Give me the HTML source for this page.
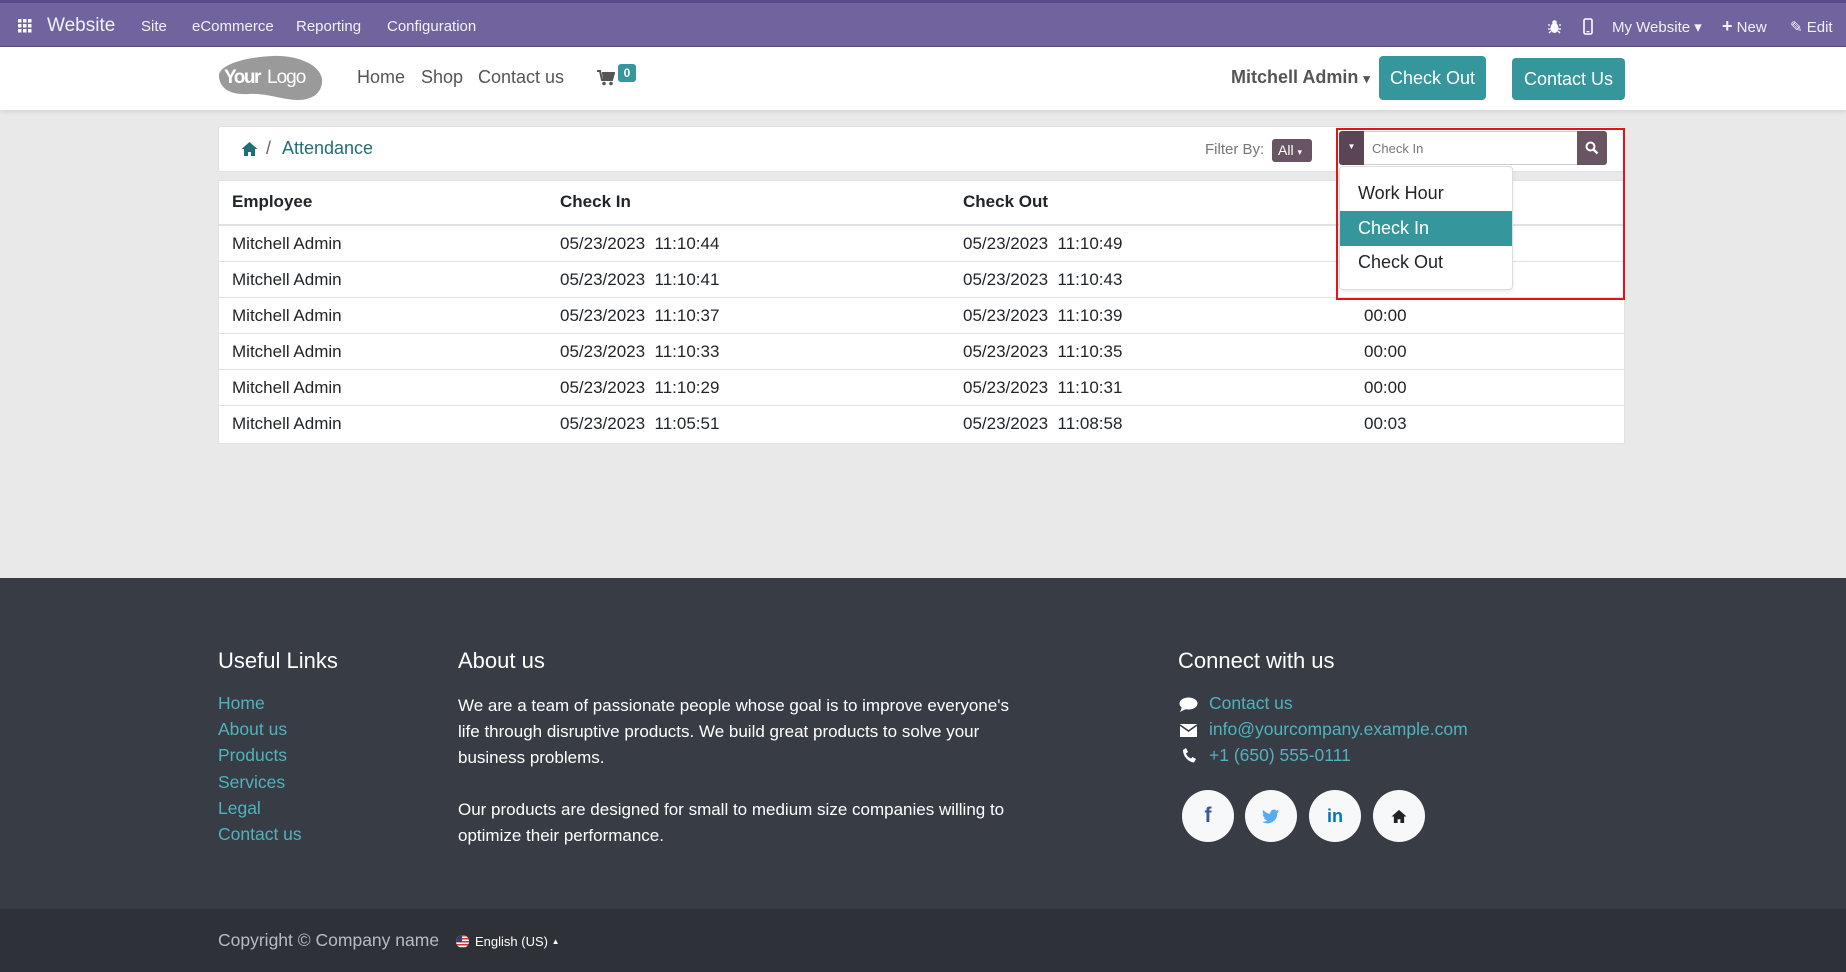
<!DOCTYPE html>
<html><head><meta charset="utf-8">
<style>
*{box-sizing:border-box;margin:0;padding:0}
body{width:1846px;height:972px;overflow:hidden;background:#e9e9ea;font-family:"Liberation Sans",sans-serif;color:#222;position:relative}
.a{position:absolute;white-space:nowrap}
.top{position:absolute;left:0;top:0;width:1846px;height:47px;background:#71639e;border-top:3px solid #5d4a8c;border-bottom:1px solid #5a4d80;color:#fff}
.top .a{color:#f2f0f7}
.hdr{position:absolute;left:0;top:47px;width:1846px;height:63px;background:#fff;box-shadow:0 2px 4px rgba(0,0,0,.08)}
.btn{position:absolute;background:#35979c;color:#fff;border-radius:4px;font-size:18px;display:flex;align-items:center;justify-content:center}
.box{position:absolute;background:#fff;border:1px solid #dee2e6;border-radius:3px}
.row{position:absolute;left:218px;width:1407px;height:36px;border-top:1px solid #dee2e6;font-size:17px;color:#212529}
.row span{position:absolute;top:8px}
.foot{position:absolute;left:0;top:578px;width:1846px;height:331px;background:#383d45}
.bot{position:absolute;left:0;top:909px;width:1846px;height:63px;background:#2e3238}
.fl{color:#4fb3bd;font-size:17.5px}
.ft{color:#fff;font-size:17.5px}
.circ{position:absolute;width:52px;height:52px;border-radius:50%;background:#f7f8fa;top:790px;display:flex;align-items:center;justify-content:center;font-weight:bold;font-size:18px}
</style></head><body>
<div class="top">
  <svg class="a" style="left:18px;top:16px" width="14" height="14" viewBox="0 0 14 14" fill="#fff"><rect x="0" y="0" width="3.5" height="3.5"/><rect x="5" y="0" width="3.5" height="3.5"/><rect x="10" y="0" width="3.5" height="3.5"/><rect x="0" y="5" width="3.5" height="3.5"/><rect x="5" y="5" width="3.5" height="3.5"/><rect x="10" y="5" width="3.5" height="3.5"/><rect x="0" y="10" width="3.5" height="3.5"/><rect x="5" y="10" width="3.5" height="3.5"/><rect x="10" y="10" width="3.5" height="3.5"/></svg>
  <div class="a" style="left:47px;top:12px;font-size:19px">Website</div>
  <div class="a" style="left:141px;top:15px;font-size:15px">Site</div>
  <div class="a" style="left:192px;top:15px;font-size:15px">eCommerce</div>
  <div class="a" style="left:296px;top:15px;font-size:15px">Reporting</div>
  <div class="a" style="left:387px;top:15px;font-size:15px">Configuration</div>
  <svg class="a" style="left:1548px;top:17px" width="13" height="14" viewBox="0 0 13 14" fill="#fff"><ellipse cx="6.5" cy="8" rx="4" ry="5"/><circle cx="6.5" cy="2.5" r="2.3"/><path d="M0 5h2M11 5h2M0 9h2.5M10.5 9h2.5M1 13l2-2M12 13l-2-2" stroke="#fff" stroke-width="1.3"/></svg>
  <svg class="a" style="left:1583px;top:15px" width="10" height="17" viewBox="0 0 10 17"><rect x="1" y="1" width="8" height="15" rx="1.5" fill="none" stroke="#fff" stroke-width="1.6"/><rect x="3.5" y="13" width="3" height="1.3" fill="#fff"/></svg>
  <div class="a" style="left:1612px;top:15px;font-size:15px">My Website ▾</div>
  <div class="a" style="left:1722px;top:13px;font-size:15px"><b style="font-size:18px">+</b> New</div>
  <div class="a" style="left:1790px;top:15px;font-size:15px">✎ Edit</div>
</div>
<div class="hdr">
  <svg class="a" style="left:216px;top:8px" width="108" height="46" viewBox="0 0 108 46"><path d="M3 22C1 10 30 2 57 1 82 0 104 10 106 24 107 38 96 45 82 45 66 45 52 38 32 39 12 40 4 32 3 22Z" fill="#9a9a9a"/><text x="8" y="28" font-family="Liberation Sans" font-size="19" font-weight="bold" fill="#fff" letter-spacing="-1.5">Your</text><text x="51" y="28" font-family="Liberation Sans" font-size="19" fill="#fff" letter-spacing="-1">Logo</text></svg>
  <div class="a" style="left:357px;top:20px;font-size:18px;color:#555">Home</div>
  <div class="a" style="left:421px;top:20px;font-size:18px;color:#555">Shop</div>
  <div class="a" style="left:478px;top:20px;font-size:18px;color:#555">Contact us</div>
  <svg class="a" style="left:597px;top:23px" width="18" height="16" viewBox="0 0 18 16" fill="#555"><path d="M0 1h3l2 9h10l2-7H5" stroke="#555" stroke-width="2" fill="none"/><path d="M5 3h12l-2 7H6z"/><circle cx="7" cy="13.5" r="1.8"/><circle cx="14" cy="13.5" r="1.8"/></svg>
  <div class="a" style="left:618px;top:17px;width:18px;height:18px;background:#35979c;color:#fff;border-radius:3px;font-size:12px;font-weight:bold;text-align:center;line-height:18px">0</div>
  <div class="a" style="left:1231px;top:20px;font-size:18px;color:#555;font-weight:bold">Mitchell Admin <span style="font-size:13px">▾</span></div>
  <div class="btn" style="left:1379px;top:9px;width:107px;height:44px">Check Out</div>
  <div class="btn" style="left:1512px;top:11px;width:113px;height:42px">Contact Us</div>
</div>

<div class="box" style="left:218px;top:126px;width:1407px;height:46px"></div>
<svg class="a" style="left:241px;top:141px" width="17" height="15" viewBox="0 0 17 15" fill="#1f6f73"><path d="M8.5 1L0.5 8h2.5v7h4v-4h3v4h4V8h2.5z"/></svg>
<div class="a" style="left:266px;top:138px;font-size:18px;color:#666">/</div>
<div class="a" style="left:282px;top:138px;font-size:18px;color:#1f6f73">Attendance</div>
<div class="a" style="left:1205px;top:141px;font-size:15px;color:#777">Filter By:</div>
<div class="a" style="left:1272px;top:139px;width:40px;height:23px;background:#685463;color:#fff;border-radius:3px;font-size:14px;line-height:23px;padding-left:6px">All <span style="font-size:9px">▾</span></div>

<div class="box" style="left:218px;top:180px;width:1407px;height:264px;border-radius:2px"></div>
<div class="a" style="left:232px;top:192px;font-size:17px;font-weight:bold;color:#212529">Employee</div>
<div class="a" style="left:560px;top:192px;font-size:17px;font-weight:bold;color:#212529">Check In</div>
<div class="a" style="left:963px;top:192px;font-size:17px;font-weight:bold;color:#212529">Check Out</div>
<div class="row" style="top:224px;border-top:2px solid #dee2e6"><span style="left:14px">Mitchell Admin</span><span style="left:342px">05/23/2023&nbsp; 11:10:44</span><span style="left:745px">05/23/2023&nbsp; 11:10:49</span></div>
<div class="row" style="top:261px"><span style="left:14px">Mitchell Admin</span><span style="left:342px">05/23/2023&nbsp; 11:10:41</span><span style="left:745px">05/23/2023&nbsp; 11:10:43</span></div>
<div class="row" style="top:297px"><span style="left:14px">Mitchell Admin</span><span style="left:342px">05/23/2023&nbsp; 11:10:37</span><span style="left:745px">05/23/2023&nbsp; 11:10:39</span><span style="left:1146px">00:00</span></div>
<div class="row" style="top:333px"><span style="left:14px">Mitchell Admin</span><span style="left:342px">05/23/2023&nbsp; 11:10:33</span><span style="left:745px">05/23/2023&nbsp; 11:10:35</span><span style="left:1146px">00:00</span></div>
<div class="row" style="top:369px"><span style="left:14px">Mitchell Admin</span><span style="left:342px">05/23/2023&nbsp; 11:10:29</span><span style="left:745px">05/23/2023&nbsp; 11:10:31</span><span style="left:1146px">00:00</span></div>
<div class="row" style="top:405px"><span style="left:14px">Mitchell Admin</span><span style="left:342px">05/23/2023&nbsp; 11:05:51</span><span style="left:745px">05/23/2023&nbsp; 11:08:58</span><span style="left:1146px">00:03</span></div>

<div class="a" style="left:1339px;top:131px;width:25px;height:34px;background:#5b4555;border-radius:3px 0 0 3px;color:#fff;font-size:8px;text-align:center;line-height:32px">▼</div>
<div class="a" style="left:1364px;top:131px;width:214px;height:34px;background:#fff;border:1px solid #ccc;border-left:none;font-size:13px;color:#777;padding:9px 8px">Check In</div>
<div class="a" style="left:1577px;top:131px;width:30px;height:34px;background:#685463;border-radius:0 3px 3px 0"><svg style="position:absolute;left:8px;top:10px" width="14" height="14" viewBox="0 0 14 14"><circle cx="5.5" cy="5.5" r="4" fill="none" stroke="#fff" stroke-width="2"/><path d="M8.5 8.5l4 4" stroke="#fff" stroke-width="2.4"/></svg></div>
<div class="a" style="left:1339px;top:166px;width:174px;height:124px;background:#fff;border:1px solid #ddd;border-radius:4px;box-shadow:0 2px 4px rgba(0,0,0,.08)"></div>
<div class="a" style="left:1358px;top:183px;font-size:18px;color:#212529">Work Hour</div>
<div class="a" style="left:1340px;top:211px;width:172px;height:35px;background:#35979c"></div>
<div class="a" style="left:1358px;top:218px;font-size:18px;color:#fff">Check In</div>
<div class="a" style="left:1358px;top:252px;font-size:18px;color:#212529">Check Out</div>
<div class="a" style="left:1336px;top:128px;width:289px;height:172px;border:2px solid #e8101b"></div>

<div class="foot"></div>
<div class="a ft" style="left:218px;top:648px;font-size:22px">Useful Links</div>
<div class="a fl" style="left:218px;top:693px">Home</div>
<div class="a fl" style="left:218px;top:719px">About us</div>
<div class="a fl" style="left:218px;top:745px">Products</div>
<div class="a fl" style="left:218px;top:772px">Services</div>
<div class="a fl" style="left:218px;top:798px">Legal</div>
<div class="a fl" style="left:218px;top:824px">Contact us</div>
<div class="a ft" style="left:458px;top:648px;font-size:22px">About us</div>
<div class="a ft" style="left:458px;top:693px;line-height:26px;white-space:normal;width:570px;font-size:17px">We are a team of passionate people whose goal is to improve everyone's life through disruptive products. We build great products to solve your business problems.<br><br>Our products are designed for small to medium size companies willing to optimize their performance.</div>
<div class="a ft" style="left:1178px;top:648px;font-size:22px">Connect with us</div>
<svg class="a" style="left:1179px;top:697px" width="19" height="16" viewBox="0 0 19 16" fill="#fff"><ellipse cx="9.5" cy="6.5" rx="9" ry="6"/><path d="M3 10l-2 5 6-3z"/></svg>
<svg class="a" style="left:1180px;top:724px" width="17" height="13" viewBox="0 0 17 13"><rect x="0" y="0" width="17" height="13" fill="#fff"/><path d="M0 1l8.5 6L17 1" stroke="#383d45" stroke-width="1.6" fill="none"/></svg>
<svg class="a" style="left:1182px;top:748px" width="14" height="15" viewBox="0 0 14 15" fill="#fff"><path d="M1 2l3-2 2 4-2 1.5c1 2.5 2.5 4 5 5L10.5 9l3.5 2-2 3.5C6 14 1 8 1 2z"/></svg>
<div class="a fl" style="left:1209px;top:693px">Contact us</div>
<div class="a fl" style="left:1209px;top:719px">info@yourcompany.example.com</div>
<div class="a fl" style="left:1209px;top:745px">+1 (650) 555-0111</div>
<div class="circ" style="left:1182px;color:#3b5998;font-size:21px">f</div>
<div class="circ" style="left:1245px"><svg width="18" height="15" viewBox="0 0 18 15"><path d="M17 2c-.6.3-1.3.5-2 .6.7-.4 1.300-1.100 1.500-1.900-.7.4-1.400.7-2.200.9A3.5 3.5 0 0 0 8.4 4.7 10 10 0 0 1 1.2 1 3.5 3.5 0 0 0 2.3 5.7c-.6 0-1.100-.2-1.600-.4 0 1.700 1.200 3.100 2.800 3.400-.5.2-1.100.2-1.600.1.4 1.400 1.800 2.400 3.300 2.400A7 7 0 0 1 0 12.700 10 10 0 0 0 15.400 4.300V3.900c.7-.5 1.200-1.100 1.600-1.900z" fill="#55acee"/></svg></div>
<div class="circ" style="left:1309px;color:#0077b5;font-size:18px">in</div>
<div class="circ" style="left:1373px"><svg width="16" height="14" viewBox="0 0 17 15" fill="#222"><path d="M8.5 1L0.5 8h2.5v7h4v-4h3v4h4V8h2.5z"/></svg></div>

<div class="bot"></div>
<div class="a" style="left:218px;top:930px;font-size:17.5px;color:#b7bcc1">Copyright © Company name</div>
<svg class="a" style="left:456px;top:935px" width="13" height="13" viewBox="0 0 13 13"><clipPath id="c"><circle cx="6.5" cy="6.5" r="6.5"/></clipPath><g clip-path="url(#c)"><rect width="13" height="13" fill="#fff"/><rect y="0" width="13" height="1.5" fill="#c33"/><rect y="3" width="13" height="1.5" fill="#c33"/><rect y="6" width="13" height="1.5" fill="#c33"/><rect y="9" width="13" height="1.5" fill="#c33"/><rect y="12" width="13" height="1.5" fill="#c33"/><rect width="6" height="7" fill="#3c3b6e"/></g></svg>
<div class="a" style="left:475px;top:934px;font-size:13px;color:#fff">English (US) <span style="font-size:8px;position:relative;top:-2px">▲</span></div>
</body></html>
